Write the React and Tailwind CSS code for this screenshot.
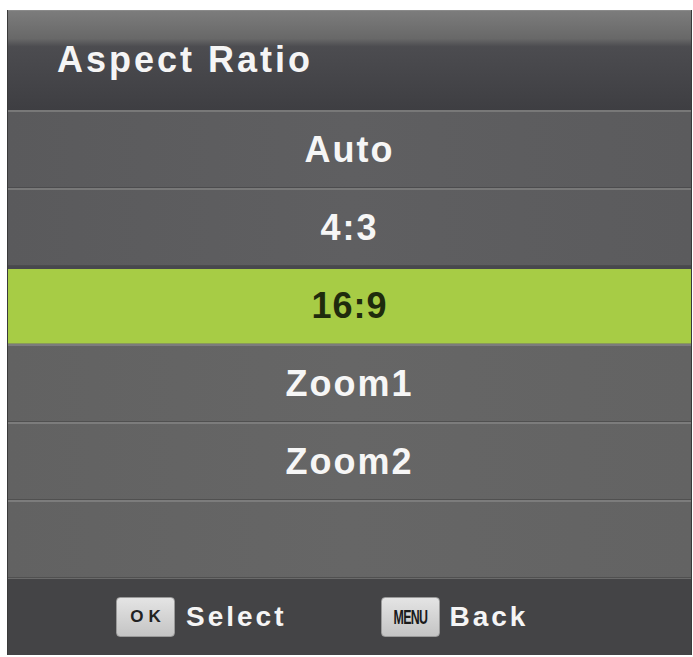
import React from 'react';

const items = ['Auto', '4:3', '16:9', 'Zoom1', 'Zoom2', ''];
const selected = 2;

function Key({ children, narrow }) {
    return (
        <div className="w-[59px] h-[40px] rounded-[4px] bg-[linear-gradient(to_bottom,#e4e4e4,#c4c4c4)] border border-[#9a9a9a] flex items-center justify-center overflow-hidden">
            <span
                className={
                    narrow
                        ? 'text-[20px] font-bold text-[#1a1a1a] tracking-[-1px] scale-x-[0.62] inline-block'
                        : 'text-[17px] font-bold text-[#222] tracking-[5px] pl-[5px]'
                }
            >
                {children}
            </span>
        </div>
    );
}

export default function App() {
    return (
        <div
            className="w-[693px] h-[657px] bg-white pt-[10px] pl-[7px] pr-[1px]"
            style={{ fontFamily: '"Liberation Sans", Arial, sans-serif' }}
        >
            <div className="flex flex-col h-[645px] border-l border-r border-[#3a3a3a] bg-[#5f5f5f]">
                {/* title bar */}
                <div className="h-[100px] shrink-0 flex items-center pl-[49px] bg-[linear-gradient(to_bottom,#7c7c7c_0%,#686868_28%,#4c4c50_36%,#3e3e42_100%)] border-t border-[#8a8a8a]">
                    <span className="text-[36px] font-bold text-[#f5f5f5] tracking-[3px] leading-none -mt-[2px]">
                        Aspect Ratio
                    </span>
                </div>

                {/* options */}
                {items.map((label, i) => (
                    <div
                        key={i}
                        className={
                            i === selected
                                ? 'h-[78px] shrink-0 flex items-center justify-center bg-[#a7cc45] border-t-[3px] border-[#48484e] border-b border-b-[#8a9a5a]'
                                : i < selected
                                  ? 'h-[78px] shrink-0 flex items-center justify-center bg-[linear-gradient(to_right,#5a5a5c,#5f5f61_50%,#5b5b5d)] border-t-2 border-[#787878] border-b border-b-[#4c4c4e]'
                                  : 'h-[78px] shrink-0 flex items-center justify-center bg-[linear-gradient(to_right,#626262,#666666_50%,#636363)] border-t-2 border-[#7c7c7c] border-b border-b-[#505050]'
                        }
                    >
                        <span
                            className={
                                i === selected
                                    ? 'text-[36px] font-bold text-[#1f2b0d] tracking-[1px] leading-none'
                                    : 'text-[36px] font-bold text-[#f6f6f6] tracking-[2px] leading-none'
                            }
                        >
                            {label}
                        </span>
                    </div>
                ))}

                {/* footer */}
                <div className="flex-1 flex items-center pl-[108px] bg-[#444446] border-t border-[#6a6a6a]">
                    <div className="flex items-center gap-[11px]">
                        <Key>OK</Key>
                        <span className="text-[28px] font-bold text-[#f5f5f5] tracking-[3px] leading-none">Select</span>
                    </div>
                    <div className="flex items-center gap-[10px] ml-[94px]">
                        <Key narrow>MENU</Key>
                        <span className="text-[28px] font-bold text-[#f5f5f5] tracking-[3px] leading-none">Back</span>
                    </div>
                </div>
            </div>
        </div>
    );
}
